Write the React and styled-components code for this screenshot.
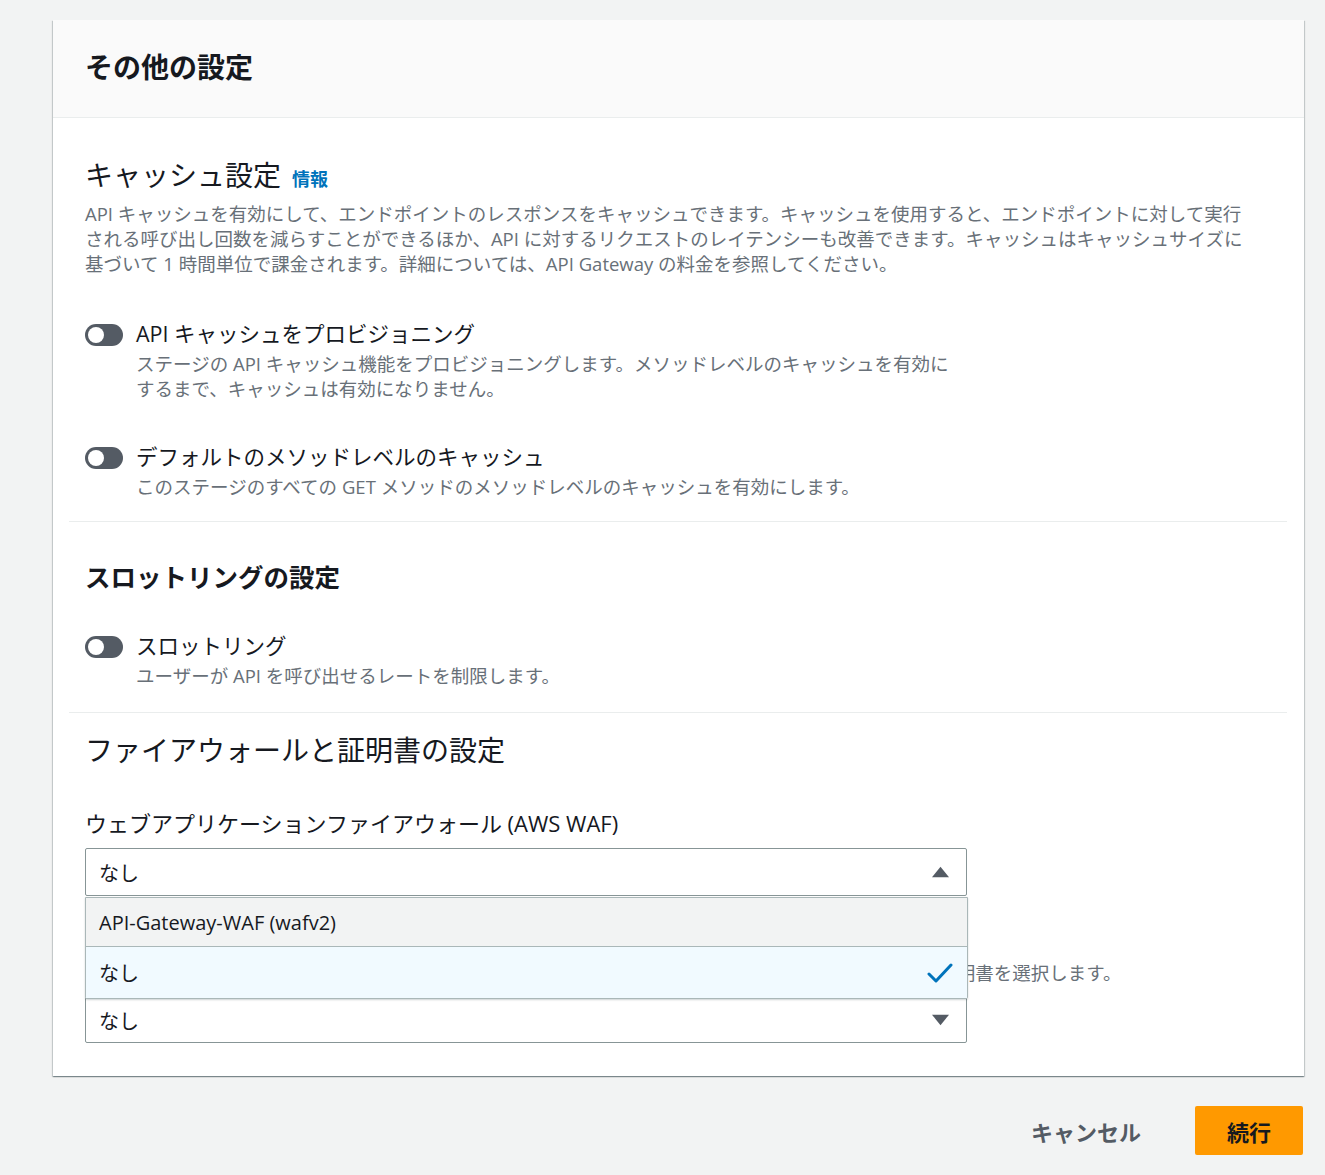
import React from "react";
import styled, { createGlobalStyle } from "styled-components";

const GlobalStyle = createGlobalStyle`
  html, body {
    margin: 0;
    padding: 0;
    background: #f2f3f3;
  }
  body {
    font-family: "Open Sans", "Noto Sans CJK JP", sans-serif;
    color: #16191f;
  }
`;

const Page = styled.div`
  padding: 20px 21px 20px 53px;
`;

const Card = styled.div`
  background: #ffffff;
  box-shadow: 0 1px 1px 0 rgba(0, 28, 36, 0.3), 1px 1px 1px 0 rgba(0, 28, 36, 0.15),
    -1px 1px 1px 0 rgba(0, 28, 36, 0.15);
`;

const Header = styled.div`
  height: 97px;
  display: flex;
  align-items: center;
  padding: 0 32px;
  background: #fafafa;
  border-bottom: 1px solid #eaeded;
`;

const Title = styled.h2`
  margin: 0;
  font-size: 28px;
  line-height: 36px;
  font-weight: 700;
  padding-bottom: 4px;
`;

const Body = styled.div`
  padding: 0 17px 33px 16px;
`;

const Section = styled.div`
  padding: ${(p) => p.pad || "0"};
  padding-left: 16px;
  padding-right: 16px;
  border-bottom: ${(p) => (p.divider ? "1px solid #eaeded" : "none")};
`;

const SectionTitle = styled.h3`
  margin: 0 0 4px;
  font-size: ${(p) => p.size || 28}px;
  line-height: 36px;
  font-weight: ${(p) => (p.bold ? 700 : 400)};
  display: flex;
  align-items: baseline;
  gap: 11px;
`;

const InfoLink = styled.a`
  font-size: 18px;
  font-weight: 700;
  color: #0073bb;
  text-decoration: none;
`;

const Description = styled.p`
  margin: 0;
  font-size: 18.5px;
  line-height: 25px;
  color: #687078;
  max-width: ${(p) => p.maxWidth || "none"};
`;

const ToggleRow = styled.div`
  display: flex;
  gap: 13px;
  margin-top: ${(p) => p.top}px;
`;

const Switch = styled.span`
  flex: none;
  position: relative;
  width: 38px;
  height: 22px;
  margin-top: 5px;
  border-radius: 11px;
  background: #545b64;

  &::after {
    content: "";
    position: absolute;
    top: 3px;
    left: 3px;
    width: 16px;
    height: 16px;
    border-radius: 50%;
    background: #ffffff;
  }
`;

const ToggleText = styled.div`
  display: flex;
  flex-direction: column;
  gap: 2px;
`;

const ToggleLabel = styled.div`
  font-size: 21.5px;
  line-height: 30px;
`;

const FieldLabel = styled.div`
  margin-top: 41px;
  font-size: 22px;
  line-height: 28px;
`;

const SelectWrap = styled.div`
  position: relative;
  width: 882px;
  margin-top: ${(p) => p.top || 0}px;
`;

const Select = styled.div`
  box-sizing: border-box;
  height: ${(p) => p.h || 48}px;
  display: flex;
  align-items: center;
  justify-content: space-between;
  padding: 0 17px 0 13px;
  border: 1px solid #879596;
  border-radius: 2px;
  background: #ffffff;
  font-size: 20px;
`;

const Caret = styled.svg`
  width: 17px;
  height: 12px;
  fill: #545b64;
`;

const Menu = styled.ul`
  position: absolute;
  top: calc(100% + 1px);
  left: 0;
  right: -1px;
  z-index: 5;
  margin: 0;
  padding: 0;
  list-style: none;
  border: 1px solid #aab7b8;
  border-radius: 0 0 2px 2px;
  box-shadow: 0 1px 2px rgba(0, 28, 36, 0.2);
`;

const Option = styled.li`
  box-sizing: border-box;
  height: ${(p) => (p.selected ? 52 : 48)}px;
  display: flex;
  align-items: center;
  justify-content: space-between;
  padding: 0 14px 0 13px;
  font-size: 20px;
  background: ${(p) => (p.selected ? "#f1faff" : "#f2f3f3")};
  border-top: ${(p) => (p.selected ? "1px solid #aab7b8" : "none")};
`;

const Check = styled.svg`
  width: 26px;
  height: 22px;
  fill: none;
  stroke: #0073bb;
  stroke-width: 3;
  stroke-linecap: round;
  stroke-linejoin: round;
`;

const HiddenField = styled.div`
  margin-top: 24px;
`;

const SmallLabel = styled.div`
  font-size: 21px;
  line-height: 28px;
  margin-bottom: 12px;
`;

const Actions = styled.div`
  display: flex;
  justify-content: flex-end;
  align-items: center;
  gap: 34px;
  margin-top: 30px;
  padding-right: 1px;
`;

const Button = styled.button`
  height: 49px;
  padding: 0 ${(p) => (p.primary ? 32 : 20)}px;
  border: none;
  border-radius: 2px;
  font-family: inherit;
  font-size: 22px;
  font-weight: 700;
  background: ${(p) => (p.primary ? "#ff9900" : "transparent")};
  color: ${(p) => (p.primary ? "#16191f" : "#545b64")};
  cursor: pointer;
`;

function Toggle({ label, desc, top, maxWidth }) {
  return (
    <ToggleRow top={top}>
      <Switch role="switch" aria-checked="false" />
      <ToggleText>
        <ToggleLabel>{label}</ToggleLabel>
        <Description maxWidth={maxWidth}>{desc}</Description>
      </ToggleText>
    </ToggleRow>
  );
}

export default function App() {
  return (
    <Page>
      <GlobalStyle />
      <Card>
        <Header>
          <Title>その他の設定</Title>
        </Header>
        <Body>
          <Section divider pad="39px 0 22px">
            <SectionTitle>
              キャッシュ設定 <InfoLink href="#">情報</InfoLink>
            </SectionTitle>
            <Description>
              API キャッシュを有効にして、エンドポイントのレスポンスをキャッシュできます。キャッシュを使用すると、エンドポイントに対して実行
              <br />
              される呼び出し回数を減らすことができるほか、API に対するリクエストのレイテンシーも改善できます。キャッシュはキャッシュサイズに
              <br />
              基づいて 1 時間単位で課金されます。詳細については、API Gateway の料金を参照してください。
            </Description>
            <Toggle
              top={43}
              maxWidth="815px"
              label="API キャッシュをプロビジョニング"
              desc="ステージの API キャッシュ機能をプロビジョニングします。メソッドレベルのキャッシュを有効にするまで、キャッシュは有効になりません。"
            />
            <Toggle
              top={41}
              label="デフォルトのメソッドレベルのキャッシュ"
              desc="このステージのすべての GET メソッドのメソッドレベルのキャッシュを有効にします。"
            />
          </Section>
          <Section divider pad="37px 0 24px">
            <SectionTitle bold size={25.5}>
              スロットリングの設定
            </SectionTitle>
            <Toggle
              top={36}
              label="スロットリング"
              desc="ユーザーが API を呼び出せるレートを制限します。"
            />
          </Section>
          <Section pad="19px 0 0">
            <SectionTitle>ファイアウォールと証明書の設定</SectionTitle>
            <FieldLabel>ウェブアプリケーションファイアウォール (AWS WAF)</FieldLabel>
            <SelectWrap top={11}>
              <Select>
                なし
                <Caret viewBox="0 0 16 10">
                  <path d="M8 0 L16 10 L0 10 Z" />
                </Caret>
              </Select>
              <Menu>
                <Option>API-Gateway-WAF (wafv2)</Option>
                <Option selected>
                  なし
                  <Check viewBox="0 0 26 22">
                    <path d="M2 12 L9 19 L24 3" />
                  </Check>
                </Option>
              </Menu>
            </SelectWrap>
            <HiddenField>
              <SmallLabel>クライアント証明書</SmallLabel>
              <Description>
                このステージの統合エンドポイントへのすべての呼び出しで API Gateway が認証に用いるクライアント証明書を選択します。
              </Description>
              <SelectWrap top={12}>
                <Select h={46}>
                  なし
                  <Caret viewBox="0 0 16 10">
                    <path d="M0 0 L16 0 L8 10 Z" />
                  </Caret>
                </Select>
              </SelectWrap>
            </HiddenField>
          </Section>
        </Body>
      </Card>
      <Actions>
        <Button>キャンセル</Button>
        <Button primary>続行</Button>
      </Actions>
    </Page>
  );
}
